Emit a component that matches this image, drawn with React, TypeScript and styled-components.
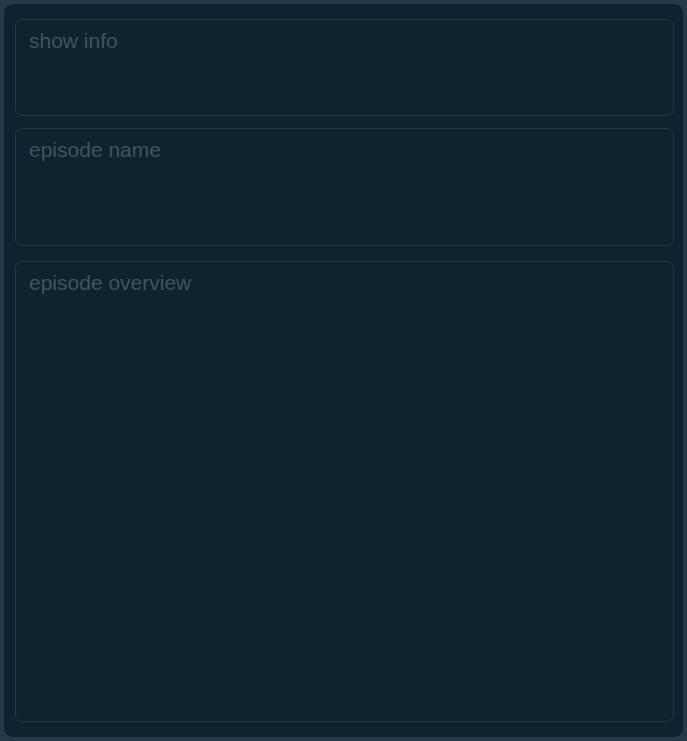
import React from "react";
import styled, { createGlobalStyle } from "styled-components";

const Global = createGlobalStyle`
  html, body { margin: 0; padding: 0; background: #25394a; height: 100%; }
  #root { height: 100%; }
  * { box-sizing: border-box; }
`;

const Page = styled.div`
  height: 741px;
  padding: 4px;
`;

const Panel = styled.div`
  height: 100%;
  background: #0e2230;
  border-radius: 9px;
  padding: 15px 9px 15px 11px;
  display: flex;
  flex-direction: column;
  gap: 12px;
`;

const Field = styled.textarea<{ $h?: number; $grow?: boolean; $top?: number }>`
  display: block;
  width: 100%;
  height: ${(p) => (p.$h ? `${p.$h}px` : "auto")};
  flex: ${(p) => (p.$grow ? "1 1 auto" : "0 0 auto")};
  margin-top: ${(p) => p.$top ?? 0}px;
  resize: none;
  background: #0e2230;
  border: 1px solid #213847;
  border-radius: 7px;
  padding: 9px 13px;
  font-family: "Liberation Sans", Arial, sans-serif;
  font-size: 21px;
  color: #8aa0ad;
  outline: none;
  &::placeholder { color: #3e5461; }
`;

export default function App() {
  return (
    <>
      <Global />
      <Page>
        <Panel>
          <Field $h={97} placeholder="show info" />
          <Field $h={118} placeholder="episode name" />
          <Field $grow $top={3} placeholder="episode overview" />
        </Panel>
      </Page>
    </>
  );
}
